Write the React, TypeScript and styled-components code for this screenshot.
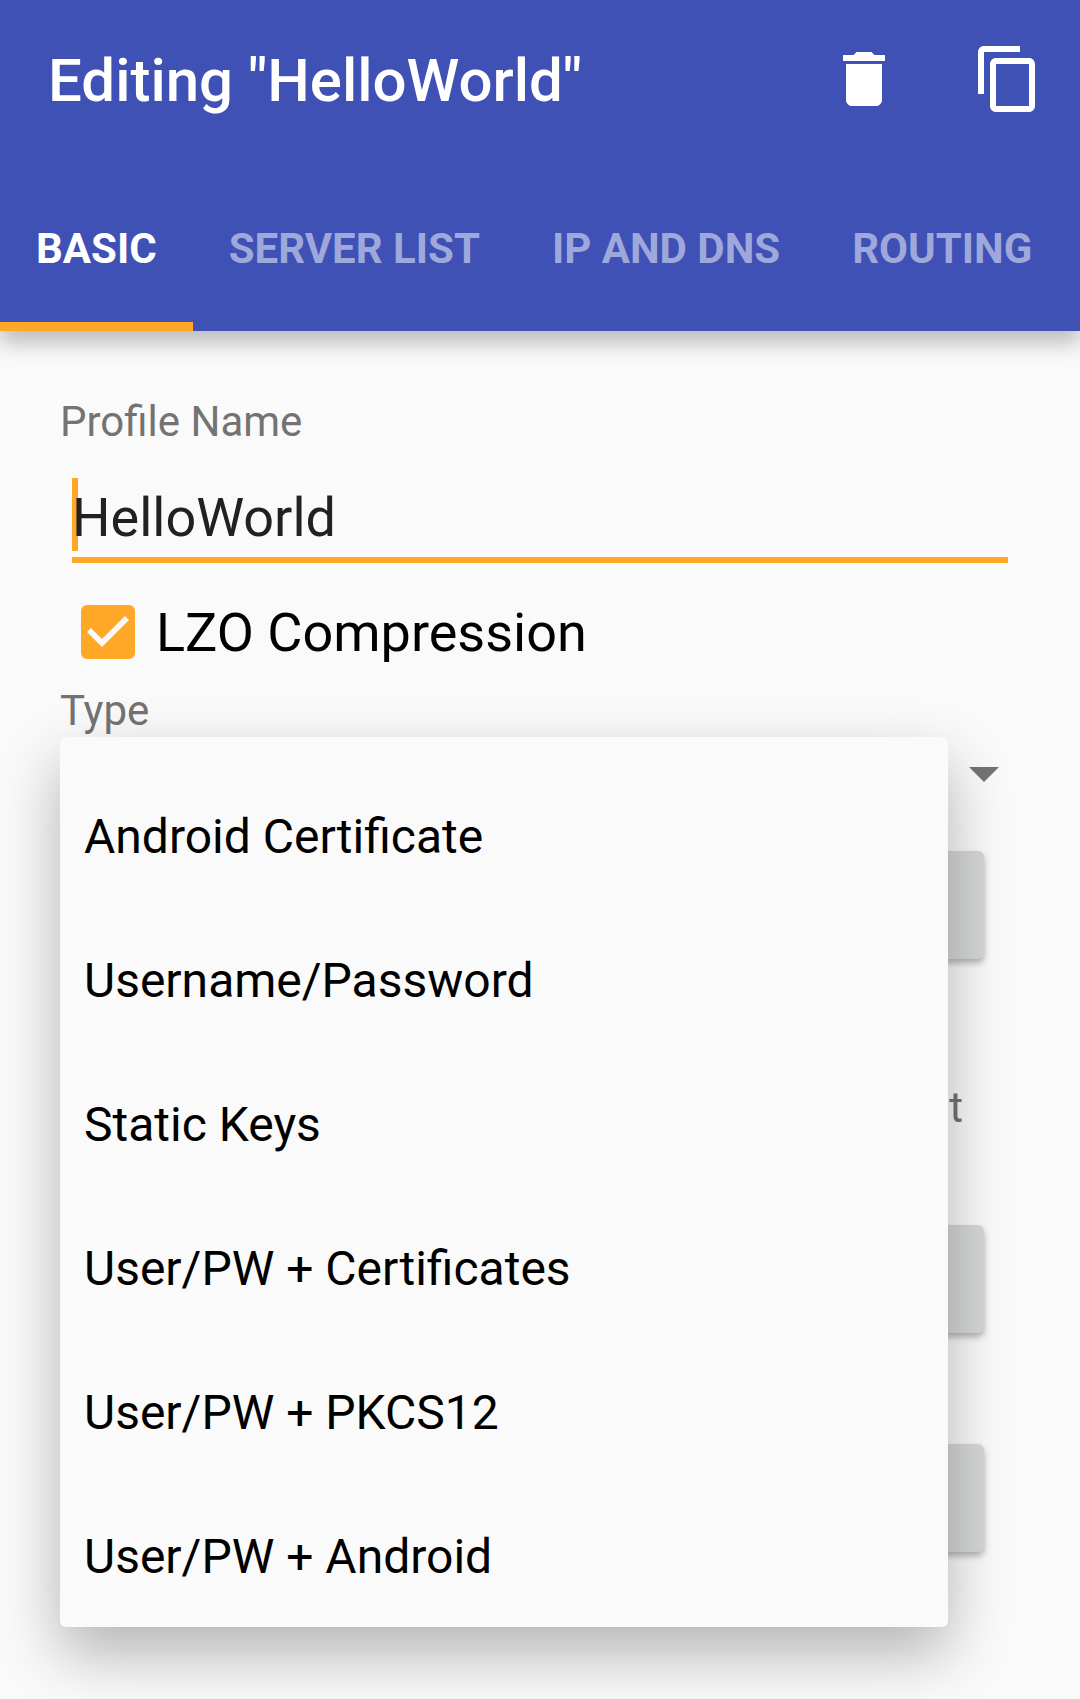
import React, { useState } from "react";
import styled, { createGlobalStyle } from "styled-components";

const GlobalStyle = createGlobalStyle`
  *, *::before, *::after { box-sizing: border-box; }
  body {
    margin: 0;
    background: #fafafa;
    font-family: Roboto, "Noto Sans", sans-serif;
    color: #000;
  }
  button, input, select { font-family: inherit; }
`;

const Page = styled.div`
  min-height: 100vh;
  display: flex;
  flex-direction: column;
  overflow-x: hidden;
`;

const AppBar = styled.header`
  position: relative;
  z-index: 1;
  background: #3f51b5;
  box-shadow: 0 12px 20px rgba(0, 0, 0, 0.25);
`;

const Toolbar = styled.div`
  display: flex;
  align-items: center;
  height: 163px;
  padding: 0 0 5px 48px;
`;

const Title = styled.h1`
  flex: 1;
  margin: 0;
  padding-top: 4px;
  font-size: 60px;
  line-height: 70px;
  font-weight: 500;
  color: #fff;
  white-space: nowrap;
`;

const IconButton = styled.button`
  width: 144px;
  height: 144px;
  padding: 36px;
  border: 0;
  background: none;
  color: #fff;
  cursor: pointer;

  svg {
    display: block;
    width: 72px;
    height: 72px;
    fill: currentColor;
  }
`;

const Tabs = styled.nav`
  display: flex;
  height: 168px;
`;

const Tab = styled.button<{ $active: boolean }>`
  padding: 12px 36px 0;
  border: 0;
  border-bottom: 9px solid ${(p) => (p.$active ? "#ffa726" : "transparent")};
  background: none;
  color: ${(p) => (p.$active ? "#fff" : "#9fa8da")};
  font-size: 42px;
  line-height: 49px;
  font-weight: 700;
  text-transform: uppercase;
  white-space: nowrap;
  cursor: pointer;
`;

const Form = styled.main`
  flex: 1;
  padding: 66px 60px;
`;

const Label = styled.label`
  display: block;
  margin-bottom: 2px;
  font-size: 42px;
  line-height: 49px;
  color: #737373;
`;

const NameInput = styled.input`
  display: block;
  width: calc(100% - 24px);
  height: 85px;
  margin: 32px 12px 0;
  padding: 0;
  border: 0;
  border-bottom: 6px solid #ffa726;
  border-radius: 0;
  outline: 0;
  background: linear-gradient(#ffa726, #ffa726) left top / 6px 73px no-repeat;
  color: #212121;
  font-size: 54px;
`;

const CheckRow = styled.label`
  display: flex;
  align-items: center;
  gap: 21px;
  height: 96px;
  margin: 21px 0 6px;
  padding-left: 21px;
  font-size: 54px;
  line-height: 63px;
`;

const CheckBox = styled.span`
  display: grid;
  width: 54px;
  height: 54px;

  input,
  svg {
    grid-area: 1 / 1;
    width: 54px;
    height: 54px;
    margin: 0;
  }

  input {
    appearance: none;
    border: 6px solid #737373;
    border-radius: 6px;
  }

  input:checked {
    border-color: #ffa726;
    background: #ffa726;
  }

  input:not(:checked) + svg {
    visibility: hidden;
  }

  svg {
    pointer-events: none;
    fill: #fafafa;
  }
`;

const Spinner = styled.div`
  position: relative;
  display: grid;
  align-items: center;
  height: 75px;
`;

const TypeSelect = styled.select`
  grid-area: 1 / 1;
  width: 100%;
  height: 75px;
  padding: 0 24px;
  border: 0;
  outline: 0;
  appearance: none;
  background: none;
  color: #000;
  font-size: 48px;
`;

const Arrow = styled.svg`
  grid-area: 1 / 1;
  justify-self: end;
  width: 30px;
  height: 15px;
  margin-right: 21px;
  fill: #737373;
  pointer-events: none;
`;

const Popup = styled.div`
  position: absolute;
  z-index: 2;
  top: 0;
  left: 0;
  right: 72px;
  display: flex;
  flex-direction: column;
  padding-top: 26px;
  border-radius: 6px;
  background: #fafafa;
  box-shadow: 0 26px 62px rgba(0, 0, 0, 0.29);
`;

const Option = styled.button`
  height: 144px;
  padding: 4px 24px 0;
  border: 0;
  background: none;
  color: #000;
  font-size: 48px;
  line-height: 56px;
  text-align: left;
  cursor: pointer;
`;

const Files = styled.section`
  display: flex;
  flex-direction: column;
  align-items: flex-end;
  padding: 39px 36px 0 0;
`;

const FileButton = styled.button`
  width: 264px;
  height: 108px;
  border: 0;
  border-radius: 6px;
  background: #d6d7d7;
  box-shadow: 0 4px 6px rgba(0, 0, 0, 0.28);

  & + & {
    margin-top: 111px;
  }
`;

const FileText = styled.p`
  margin: 124px 21px 93px;
  font-size: 42px;
  line-height: 49px;
  color: #737373;
`;

const tabs = ["Basic", "Server List", "IP and DNS", "Routing"];

const types = [
  "Android Certificate",
  "Username/Password",
  "Static Keys",
  "User/PW + Certificates",
  "User/PW + PKCS12",
  "User/PW + Android",
];

export default function App() {
  const [tab, setTab] = useState(tabs[0]);
  const [name, setName] = useState("HelloWorld");
  const [lzo, setLzo] = useState(true);
  const [type, setType] = useState(types[0]);
  const [open, setOpen] = useState(true);

  const choose = (value: string) => {
    setType(value);
    setOpen(false);
  };

  return (
    <Page>
      <GlobalStyle />
      <AppBar>
        <Toolbar>
          <Title>Editing "HelloWorld"</Title>
          <IconButton aria-label="Delete">
            <svg viewBox="0 0 24 24">
              <path d="M6 19c0 1.1.9 2 2 2h8c1.1 0 2-.9 2-2V7H6v12zM19 4h-3.5l-1-1h-5l-1 1H5v2h14V4z" />
            </svg>
          </IconButton>
          <IconButton aria-label="Duplicate">
            <svg viewBox="0 0 24 24">
              <path d="M16 1H4c-1.1 0-2 .9-2 2v14h2V3h12V1zm3 4H8c-1.1 0-2 .9-2 2v14c0 1.1.9 2 2 2h11c1.1 0 2-.9 2-2V7c0-1.1-.9-2-2-2zm0 16H8V7h11v14z" />
            </svg>
          </IconButton>
        </Toolbar>
        <Tabs>
          {tabs.map((t) => (
            <Tab key={t} $active={t === tab} onClick={() => setTab(t)}>
              {t}
            </Tab>
          ))}
        </Tabs>
      </AppBar>
      <Form>
        <Label htmlFor="profile">Profile Name</Label>
        <NameInput id="profile" value={name} onChange={(e) => setName(e.target.value)} />
        <CheckRow>
          <CheckBox>
            <input type="checkbox" checked={lzo} onChange={(e) => setLzo(e.target.checked)} />
            <svg viewBox="0 0 54 54">
              <path d="M6 27l4-4 11 11L44 11l4 4L21 42z" />
            </svg>
          </CheckBox>
          LZO Compression
        </CheckRow>
        <Label htmlFor="type">Type</Label>
        <Spinner>
          <TypeSelect
            id="type"
            value={type}
            onMouseDown={(e) => {
              e.preventDefault();
              setOpen(true);
            }}
            onChange={(e) => setType(e.target.value)}
          >
            {types.map((t) => (
              <option key={t}>{t}</option>
            ))}
          </TypeSelect>
          <Arrow viewBox="0 0 30 15">
            <path d="M0 0h30L15 15z" />
          </Arrow>
          {open && (
            <Popup role="listbox" aria-label="Type">
              {types.map((t) => (
                <Option key={t} role="option" aria-selected={t === type} onClick={() => choose(t)}>
                  {t}
                </Option>
              ))}
            </Popup>
          )}
        </Spinner>
        <Files>
          <FileButton aria-label="Select file" />
          <FileText>t</FileText>
          <FileButton aria-label="Select file" />
          <FileButton aria-label="Select file" />
        </Files>
      </Form>
    </Page>
  );
}
